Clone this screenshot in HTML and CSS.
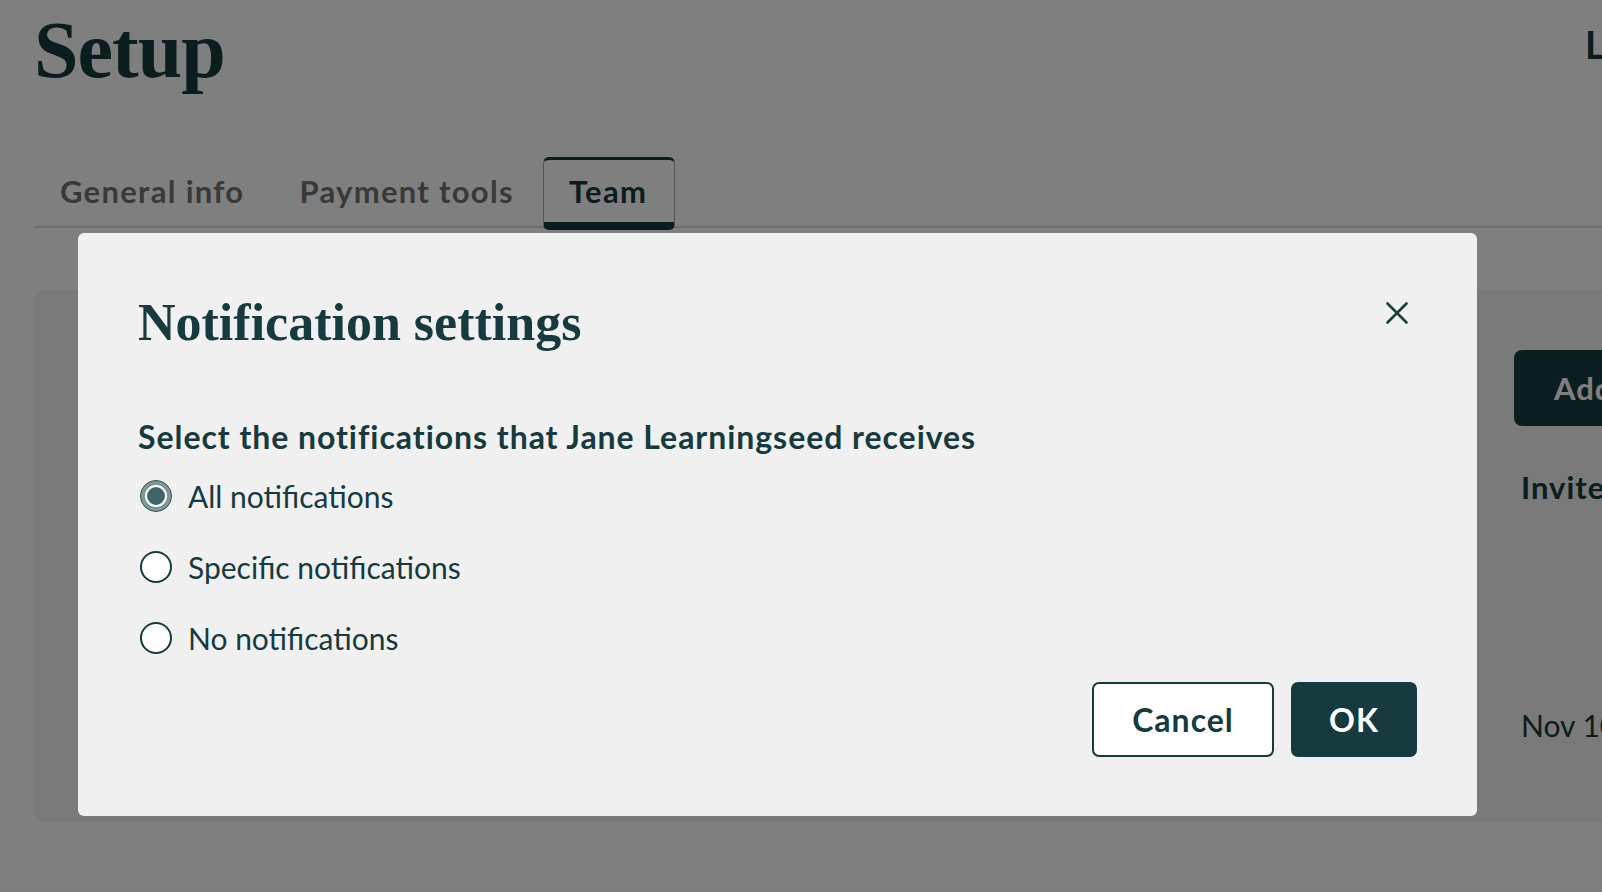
FILE: index.html
```html
<!DOCTYPE html>
<html lang="en">

<head>
    <meta charset="UTF-8">
    <meta name="viewport" content="width=device-width, initial-scale=1.0">
    <title>Setup - Team</title>
    <link rel="stylesheet" href="styles.css">
</head>

<body>
    <div class="page">
        <div class="top-row">
            <h1 class="page-title">Setup</h1>
            <div class="account">Learningseed</div>
        </div>

        <div class="tabs">
            <a class="tab" href="#">General info</a>
            <a class="tab" href="#">Payment tools</a>
            <a class="tab active" href="#">Team</a>
        </div>

        <div class="card">
            <div class="team-list"></div>
            <div class="side">
                <button class="add-btn" type="button">Add member</button>
                <div class="invite-title">Invited</div>
                <div class="invite-date">Nov 10, 2023</div>
            </div>
        </div>
    </div>

    <!-- Modal -->
    <div class="overlay">
        <div class="dialog">
            <div class="dialog-head">
                <h2 class="dialog-title">Notification settings</h2>
                <button class="close-btn" type="button" aria-label="Close">
                    <svg width="22" height="22" viewBox="0 0 22 22">
                        <path d="M1.5 1.5 L20.5 20.5 M20.5 1.5 L1.5 20.5" stroke="#173f40" stroke-width="2.6" stroke-linecap="round" fill="none" />
                    </svg>
                </button>
            </div>

            <p class="choice-label">Select the notifications that Jane Learningseed receives</p>

            <div class="choices">
                <label class="choice">
                    <span class="radio checked"></span>
                    <span>All notifications</span>
                </label>
                <label class="choice">
                    <span class="radio"></span>
                    <span>Specific notifications</span>
                </label>
                <label class="choice">
                    <span class="radio"></span>
                    <span>No notifications</span>
                </label>
            </div>

            <div class="dialog-actions">
                <button class="btn btn-outline" type="button">Cancel</button>
                <button class="btn btn-dark" type="button">OK</button>
            </div>
        </div>
    </div>
</body>

</html>
```

FILE: styles.css
```css
* {
    box-sizing: border-box;
}

body {
    font-family: Lato, "Open Sans", sans-serif;
    font-size: 30px;
    color: #163a3d;
    background-color: white;
    margin: 0;
    padding: 0;
    overflow: hidden;
}

.page {
    width: 1800px;
    padding-left: 34px;
}

.top-row {
    display: grid;
    grid-template-columns: 1551px 1fr;
}

.page-title {
    font-family: "Liberation Serif", serif;
    font-size: 80px;
    line-height: 90px;
    font-weight: bold;
    letter-spacing: -1px;
    margin: 0;
    padding-top: 5px;
}

.account {
    font-size: 38px;
    font-weight: bold;
    line-height: 46px;
    padding-top: 21px;
}

/* Tabs */
.tabs {
    display: flex;
    gap: 3px;
    margin-top: 62px;
    border-bottom: 2px solid #dcdcdc;
}

.tab {
    display: block;
    padding: 11px 25px;
    font-size: 31px;
    line-height: 40px;
    letter-spacing: 1.3px;
    color: #727272;
    text-decoration: none;
    font-weight: bold;
    border: 1px solid transparent;
    border-top-width: 3px;
    border-bottom-width: 8px;
    border-radius: 6px;
    margin-bottom: -4px;
}

.tab.active {
    padding-right: 27px;
    color: #163a3d;
    border-color: #a8a8a8;
    border-top-color: #163a3d;
    border-bottom-color: #163a3d;
}

/* Card behind the modal */
.card {
    display: grid;
    grid-template-columns: 1480px 1fr;
    margin-top: 62px;
    height: 532px;
    background-color: #f4f4f4;
    border-radius: 12px;
}

.side {
    padding-top: 60px;
}

.add-btn {
    font-family: inherit;
    font-size: 31px;
    font-weight: bold;
    letter-spacing: 1px;
    color: white;
    background-color: #163a3d;
    border: none;
    border-radius: 8px;
    height: 76px;
    padding: 0 40px;
    white-space: nowrap;
}

.invite-title {
    font-size: 31px;
    font-weight: bold;
    letter-spacing: 1px;
    margin: 41px 0 0 7px;
    line-height: 40px;
}

.invite-date {
    margin: 198px 0 0 7px;
    line-height: 40px;
}

/* Modal */
.overlay {
    position: fixed;
    top: 0;
    left: 0;
    right: 0;
    bottom: 0;
    background-color: rgba(0, 0, 0, 0.5);
    padding: 233px 0 0 78px;
}

.dialog {
    width: 1399px;
    height: 583px;
    background-color: #f0f0f0;
    border-radius: 6px;
    padding: 60px;
}

.dialog-head {
    display: flex;
    justify-content: space-between;
    align-items: flex-start;
}

.dialog-title {
    font-family: "Liberation Serif", serif;
    font-size: 52px;
    line-height: 60px;
    font-weight: bold;
    margin: 0;
}

.close-btn {
    width: 40px;
    height: 40px;
    padding: 0;
    border: none;
    background: none;
    display: flex;
    align-items: center;
    justify-content: center;
}

.choice-label {
    font-size: 32px;
    font-weight: bold;
    letter-spacing: 0.95px;
    line-height: 40px;
    margin: 64px 0 0;
}

.choices {
    margin-top: 3px;
}

.choice {
    display: flex;
    align-items: center;
    gap: 16px;
    height: 71px;
    padding-left: 2px;
}

.radio {
    width: 32px;
    height: 32px;
    border-radius: 50%;
    border: 2px solid #163a3d;
    background-color: white;
}

.radio.checked {
    border: 1.5px solid #2f5556;
    background-color: #3d6466;
    box-shadow: inset 0 0 0 4px #7f9596, inset 0 0 0 6px white;
}

.dialog-actions {
    display: flex;
    justify-content: flex-end;
    gap: 17px;
    margin-top: 9px;
}

.btn {
    font-family: inherit;
    font-size: 32px;
    font-weight: bold;
    letter-spacing: 1px;
    height: 75px;
    border-radius: 7px;
    cursor: pointer;
}

.btn-outline {
    width: 182px;
    color: #163a3d;
    background-color: white;
    border: 2px solid #163a3d;
}

.btn-dark {
    width: 126px;
    color: white;
    background-color: #163a3d;
    border: none;
}
```
